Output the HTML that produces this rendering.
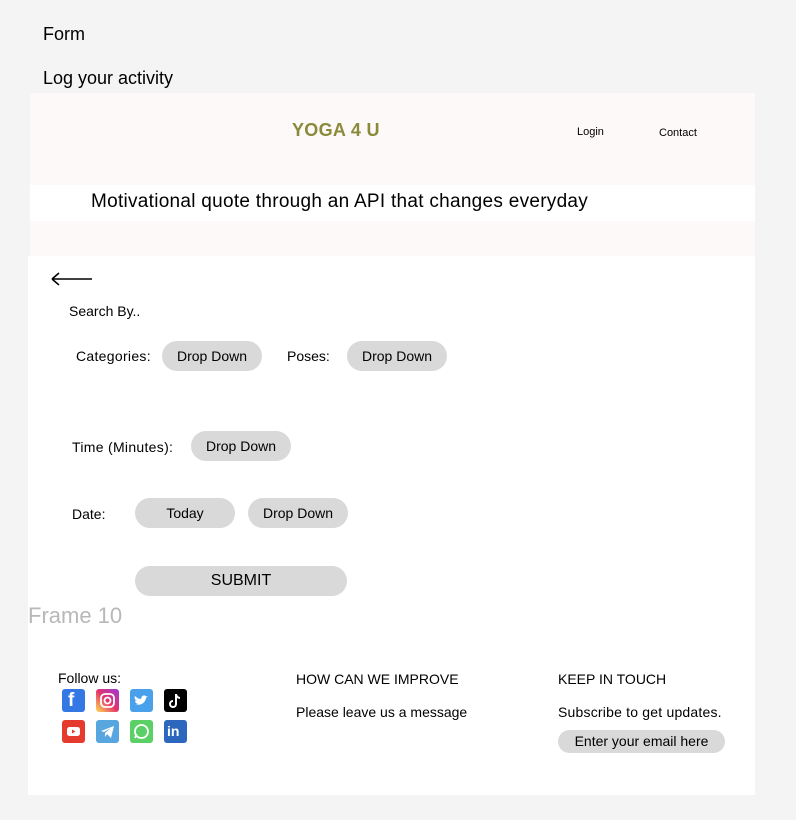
<!DOCTYPE html>
<html><head><style>
body{margin:0;width:796px;height:820px;background:#f4f4f4;font-family:"Liberation Sans",sans-serif;position:relative;overflow:hidden;color:#000}
.a{position:absolute;white-space:nowrap}
.pill{position:absolute;background:#d9d9d9;border-radius:15px;text-align:center;font-size:14px;line-height:30px}
.ic{position:absolute;width:23px;height:23px;border-radius:3px}
.ic svg{position:absolute;left:0;top:0}
</style></head><body>
<div class="a" style="left:43px;top:24px;font-size:18px">Form</div>
<div class="a" style="left:43px;top:68px;font-size:18px">Log your activity</div>
<div class="a" style="left:28px;top:256px;width:727px;height:539px;background:#fff"></div>
<div class="a" style="left:30px;top:93px;width:725px;height:163px;background:#fcf9f8"></div>
<div class="a" style="left:30px;top:185px;width:725px;height:36px;background:#fff"></div>
<div class="a" style="left:292px;top:120px;font-size:18px;font-weight:bold;color:#8a8a3a;letter-spacing:0.3px">YOGA 4 U</div>
<div class="a" style="left:577px;top:126px;font-size:11px">Login</div>
<div class="a" style="left:659px;top:127px;font-size:11px">Contact</div>
<div class="a" style="left:91px;top:191px;font-size:19px;letter-spacing:0.28px">Motivational quote through an API that changes everyday</div>
<svg class="a" style="left:51px;top:272px" width="42" height="14"><path d="M1 7H41M1 7L8 1M1 7L8 13" stroke="#000" stroke-width="1.5" fill="none"/></svg>
<div class="a" style="left:69px;top:303px;font-size:14px">Search By..</div>
<div class="a" style="left:76px;top:348px;font-size:14px;letter-spacing:0.3px">Categories:</div>
<div class="pill" style="left:162px;top:341px;width:100px">Drop Down</div>
<div class="a" style="left:287px;top:348px;font-size:14px">Poses:</div>
<div class="pill" style="left:347px;top:341px;width:100px">Drop Down</div>
<div class="a" style="left:72px;top:439px;font-size:14px;letter-spacing:0.3px">Time (Minutes):</div>
<div class="pill" style="left:191px;top:431px;width:100px">Drop Down</div>
<div class="a" style="left:72px;top:506px;font-size:14px">Date:</div>
<div class="pill" style="left:135px;top:498px;width:100px">Today</div>
<div class="pill" style="left:248px;top:498px;width:100px">Drop Down</div>
<div class="pill" style="left:135px;top:566px;width:212px;font-size:16px">SUBMIT</div>
<div class="a" style="left:28px;top:603px;font-size:22px;color:#b8b8b8">Frame 10</div>
<div class="a" style="left:58px;top:670px;font-size:14px">Follow us:</div>
<div class="ic" style="left:62px;top:689px;background:#3478e6"></div>
<div class="ic" style="left:96px;top:689px;background:linear-gradient(45deg,#fd5,#e2336b,#9b3bd8)"><svg width="23" height="23"><rect x="5" y="5" width="13" height="13" rx="4" fill="none" stroke="#fff" stroke-width="1.8"/><circle cx="11.5" cy="11.5" r="3" fill="none" stroke="#fff" stroke-width="1.8"/></svg></div>
<div class="ic" style="left:130px;top:689px;background:#4aa1eb"><svg width="23" height="23"><path d="M5 15c4 2 10 0 11-6l2-2-2 .5C15 6 13 6 12 7.5 11 9 11 10 11 10 8 10 6 8 5 7c-1 2 0 4 2 5-1 0-1.5 0-2-.5 0 2 1.5 3 3 3.5-1 .5-2 .5-3 0z" fill="#fff"/></svg></div>
<div class="ic" style="left:164px;top:689px;background:#000"><svg width="23" height="23"><path d="M12 5v10a3 3 0 1 1-3-3M12 5c0 2 2 4 4 4" fill="none" stroke="#fff" stroke-width="2"/></svg></div>
<div class="ic" style="left:62px;top:720px;background:#e53a2e"><svg width="23" height="23"><rect x="5" y="7" width="13" height="9" rx="2.5" fill="#fff"/><path d="M10 9.5v4l3.5-2z" fill="#e53a2e"/></svg></div>
<div class="ic" style="left:96px;top:720px;background:#58a6e0"><svg width="23" height="23"><path d="M5 11l13-5-3 12-4-4-2 3v-4l6-5-7 4z" fill="#fff"/></svg></div>
<div class="ic" style="left:130px;top:720px;background:#5bd066"><svg width="23" height="23"><circle cx="11.5" cy="11.5" r="6.5" fill="none" stroke="#fff" stroke-width="1.8"/><path d="M5 18l1.5-4" stroke="#fff" stroke-width="1.8"/></svg></div>
<div class="ic" style="left:164px;top:720px;background:#2d67bd"></div>
<div class="a" style="left:68px;top:690px;color:#fff;font-weight:bold;font-size:19px">f</div>
<div class="a" style="left:167px;top:723px;color:#fff;font-weight:bold;font-size:14px">in</div>
<div class="a" style="left:296px;top:671px;font-size:14px">HOW CAN WE IMPROVE</div>
<div class="a" style="left:296px;top:704px;font-size:14px">Please leave us a message</div>
<div class="a" style="left:558px;top:671px;font-size:14px">KEEP IN TOUCH</div>
<div class="a" style="left:558px;top:704px;font-size:14px;letter-spacing:0.2px">Subscribe to get updates.</div>
<div class="pill" style="left:558px;top:730px;width:167px;height:23px;line-height:23px;font-size:14px">Enter your email here</div>
</body></html>
